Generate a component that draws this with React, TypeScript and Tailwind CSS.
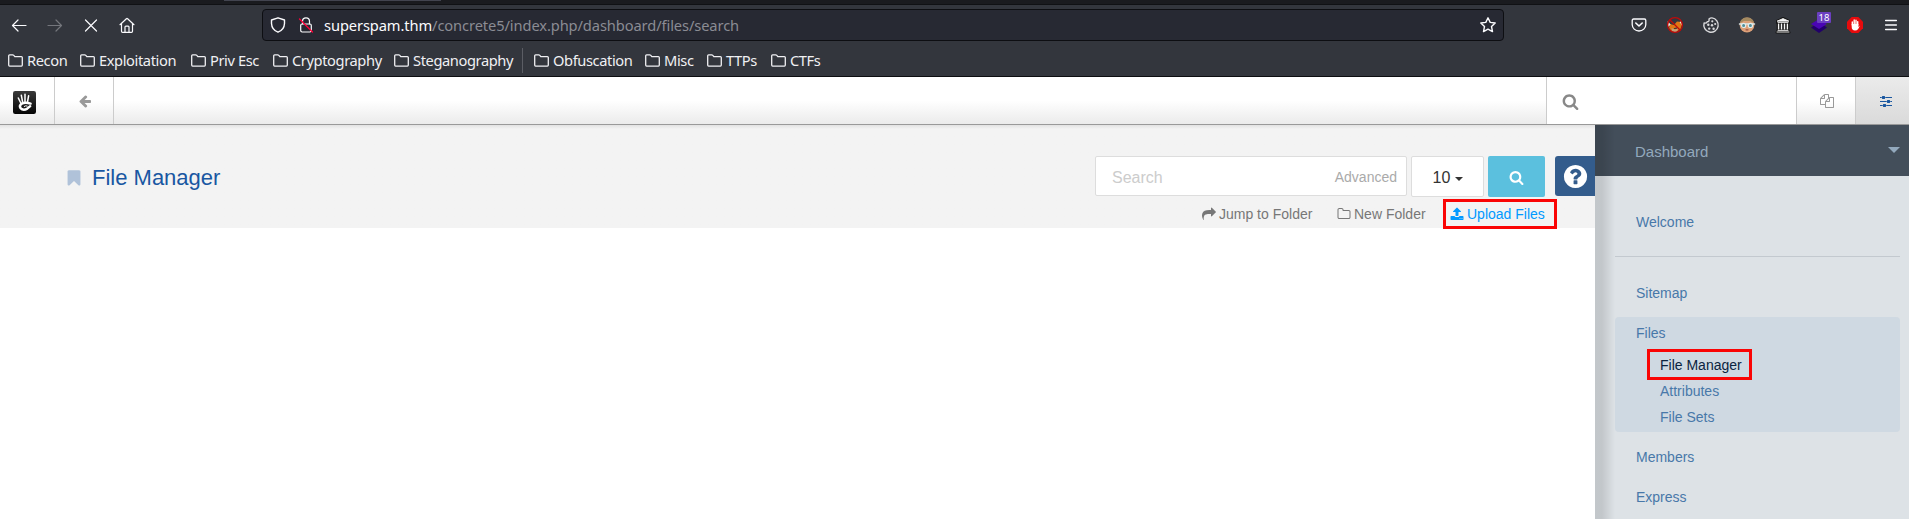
import React from "react";

const FA = {
  search: "M1216 832q0-185-131.5-316.5t-316.5-131.5-316.5 131.5-131.5 316.5 131.5 316.5 316.5 131.5 316.5-131.5 131.5-316.5zm512 832q0 52-38 90t-90 38q-54 0-90-38l-343-342q-179 124-399 124-143 0-273.5-55.5t-225-150-150-225-55.5-273.5 55.5-273.5 150-225 225-150 273.5-55.5 273.5 55.5 225 150 150 225 55.5 273.5q0 220-124 399l343 343q37 37 37 90z",
  bookmark: "M1420 128q23 0 44 9 33 13 52.5 41t19.5 62v1289q0 34-19.5 62t-52.5 41q-19 8-44 8-48 0-83-32l-441-424-441 424q-36 33-83 33-23 0-44-9-33-13-52.5-41t-19.5-62v-1289q0-34 19.5-62t52.5-41q21-9 44-9h1048z",
  arrowLeft: "M1664 896v128q0 53-32.5 90.5t-84.5 37.5h-704l293 294q38 36 38 90t-38 90l-75 76q-37 37-90 37-52 0-91-37l-651-652q-37-37-37-90 0-52 37-91l651-650q38-38 91-38 52 0 90 38l75 74q38 38 38 91t-38 91l-293 293h704q52 0 84.5 37.5t32.5 90.5z",
  share: "M1792 640q0 26-19 45l-512 512q-19 19-45 19t-45-19-19-45v-256h-224q-98 0-175.5 6t-154 21.5-133 42.5-105.5 69.5-80 101-48.5 138.5-17.5 181q0 55 5 123 0 6 2.5 23.5t2.5 26.5q0 15-8.5 25t-23.5 10q-16 0-28-17-7-9-13-22t-13.5-30-10.5-24q-127-285-127-451 0-199 53-333 162-403 875-403h224v-256q0-26 19-45t45-19 45 19l512 512q19 19 19 45z",
  upload: "M1344 1472q0-26-19-45t-45-19-45 19-19 45 19 45 45 19 45-19 19-45zm256 0q0-26-19-45t-45-19-45 19-19 45 19 45 45 19 45-19 19-45zm128-224v320q0 40-28 68t-68 28h-1472q-40 0-68-28t-28-68v-320q0-40 28-68t68-28h427q21 56 70.5 92t110.5 36h256q61 0 110.5-36t70.5-92h427q40 0 68 28t28 68zm-325-648q-17 40-59 40h-256v448q0 26-19 45t-45 19h-256q-26 0-45-19t-19-45v-448h-256q-42 0-59-40-17-39 14-69l448-448q18-19 45-19t45 19l448 448q31 30 14 69z",
  folder: "M1600 1312v-704q0-40-28-68t-68-28h-704q-40 0-68-28t-28-68v-64q0-40-28-68t-68-28h-320q-40 0-68 28t-28 68v960q0 40 28 68t68 28h1216q40 0 68-28t28-68zm128-704v704q0 92-66 158t-158 66h-1216q-92 0-158-66t-66-158v-960q0-92 66-158t158-66h320q92 0 158 66t66 158v32h672q92 0 158 66t66 158z",
  question: "M1024 1376v-192q0-14-9-23t-23-9h-192q-14 0-23 9t-9 23v192q0 14 9 23t23 9h192q14 0 23-9t9-23zm256-672q0-88-55.5-163t-138.5-116-170-41q-243 0-371 213-15 24 8 42l132 100q7 6 19 6 16 0 25-12 53-68 86-92 34-24 86-24 48 0 85.5 26t37.5 59q0 38-20 61t-68 45q-63 28-115.5 86.5t-52.5 125.5v36q0 14 9 23t23 9h192q14 0 23-9t9-23q0-19 21.5-49.5t54.5-49.5q32-18 49-28.5t46-35 44.5-48 28-60.5 12.5-81zm384 192q0 209-103 385.5t-279.5 279.5-385.5 103-385.5-103-279.5-279.5-103-385.5 103-385.5 279.5-279.5 385.5-103 385.5 103 279.5 279.5 103 385.5z",
  files: "M1696 384q40 0 68 28t28 68v1216q0 40-28 68t-68 28h-960q-40 0-68-28t-28-68v-288h-544q-40 0-68-28t-28-68v-672q0-40 20-88t48-76l408-408q28-28 76-48t88-20h416q40 0 68 28t28 68v328q68-40 128-40h416zm-544 213l-299 299h299v-299zm-640-384l-299 299h299v-299zm196 647l316-316v-416h-384v416q0 40-28 68t-68 28h-416v640h512v-256q0-40 20-88t48-76zm956 804v-1152h-384v416q0 40-28 68t-68 28h-416v640h896z",
  sliders: "M352 1408v128h-352v-128h352zm352-128q26 0 45 19t19 45v256q0 26-19 45t-45 19h-256q-26 0-45-19t-19-45v-256q0-26 19-45t45-19h256zm160-384v128h-864v-128h864zm-640-512v128h-224v-128h224zm1312 1024v128h-736v-128h736zm-960-1152q26 0 45 19t19 45v256q0 26-19 45t-45 19h-256q-26 0-45-19t-19-45v-256q0-26 19-45t45-19h256zm640 512q26 0 45 19t19 45v256q0 26-19 45t-45 19h-256q-26 0-45-19t-19-45v-256q0-26 19-45t45-19h256zm320 128v128h-224v-128h224zm0-512v128h-864v-128h864z",
};

function Fa({ name, className }: { name: keyof typeof FA; className: string }) {
  return (
    <svg viewBox="0 0 1792 1792" fill="currentColor" className={`shrink-0 overflow-visible ${className}`}>
      <path d={FA[name]} />
    </svg>
  );
}

function Line({ children, className = "" }: { children: React.ReactNode; className?: string }) {
  return (
    <svg viewBox="0 0 16 16" width="16" height="16" fill="none" stroke="currentColor" strokeWidth="1.2" strokeLinecap="round" strokeLinejoin="round" className={`block shrink-0 overflow-visible ${className}`}>
      {children}
    </svg>
  );
}

function Bookmark({ label, width }: { label: string; width: string }) {
  return (
    <div className={`flex shrink-0 items-center ${width}`}>
      <Line className="mr-[3px]">
        <path d="M.7 13.1V3.7Q.7 2.8 1.6 2.8H4.6Q5.3 2.8 5.8 3.4L6.8 4.6H13.4Q14.3 4.6 14.3 5.5V13.1Q14.3 14.1 13.4 14.1H1.6Q.7 14.1.7 13.1Z" strokeWidth="1.3" />
      </Line>
      <span className="whitespace-nowrap">{label}</span>
    </div>
  );
}

function Browser() {
  return (
    <header className="h-[77px] shrink-0 border-b border-[#0d0e11] bg-[#33363d] font-['Noto_Sans',sans-serif] text-[#fbfbfe]">
      <div className="flex h-[5px] border-b border-[#101114] bg-[#1a1b1f]">
        <div className="ml-[224px] h-px w-[217px] bg-[#42444f]" />
      </div>
      <div className="flex h-[40px] items-center">
        <div className="flex w-[262px] items-center pl-[11px]">
          <Line><path d="M1.5 8.5H15M7 3L1.5 8.5L7 14" /></Line>
          <Line className="ml-[20px] text-[#74767c]"><path d="M1 8.5H14.5M9 3L14.5 8.5L9 14" /></Line>
          <Line className="ml-[20px]"><path d="M2.5 3L13.5 14M13.5 3L2.5 14" /></Line>
          <Line className="ml-[20px]">
            <path d="M1 7.7L7.4 1.7Q8 1.2 8.6 1.7L15 7.7M2.5 6.5V14.2Q2.5 15.3 3.6 15.3H12.4Q13.5 15.3 13.5 14.2V6.5M6 15V10Q6 9.1 6.9 9.1H9.1Q10 9.1 10 10V15" />
          </Line>
        </div>
        <div className="flex h-[32px] w-[1242px] items-center rounded-[4px] border border-[#0d0e12] bg-[#272933] pl-[7px] pr-[7px] text-[14.67px] tracking-[-0.1px]">
          <Line><path d="M8 .8L14.5 3V6.5C14.3 11 12 13.7 8 15.2C4 13.7 1.7 11 1.5 6.5V3Z" strokeWidth="1.4" /></Line>
          <Line className="ml-[12px]">
            <rect x="2.7" y="7" width="10.6" height="8" rx="1.4" />
            <path d="M4.5 6.8V4.3A3.5 3.5 0 0 1 11.5 4.3V6.8" />
            <path d="M1.5 2L14.5 15" stroke="#ff0039" strokeWidth="1.3" />
          </Line>
          <div className="ml-[10px] flex-1 whitespace-nowrap text-[#8b8c94]"><span className="text-[#fbfbfe]">superspam.thm</span>/concrete5/index.php/dashboard/files/search</div>
          <Line><path d="M8 .8L10.2 5.4L15.2 6L11.5 9.5L12.5 14.6L8 12.1L3.5 14.6L4.5 9.5L.8 6L5.8 5.4Z" strokeWidth="1.4" /></Line>
        </div>
        <div className="flex items-center gap-[20px] pl-[127px]">
          <Line>
            <path d="M2.6 2H13.4Q14.8 2 14.8 3.4V7.5A6.8 6.5 0 0 1 1.2 7.5V3.4Q1.2 2 2.6 2Z" strokeWidth="1.3" />
            <path d="M4.8 6L8 9L11.2 6" strokeWidth="1.6" />
          </Line>
          <Line>
            <path d="M3 7L7 8L10 4.5L14 5L15 8L13.5 12L9 15L5 14.5L2 11Z" fill="#df7714" stroke="none" />
            <path d="M.7 4L3.6 7.5L1.2 10ZM14.8 4L12.6 5L15 8.5Z" fill="#f4e8df" stroke="none" />
            <path d="M4.5 11L8 12.5L11 11.5L10 14.5L8 15.3L5 14Z" fill="#c5a17a" stroke="none" />
            <path d="M7.5 11.5L9.5 11.2" stroke="#33363d" />
            <circle cx="8" cy="8" r="7.4" stroke="#c00a0a" strokeWidth="1.3" />
            <path d="M3 3L13 13" stroke="#c00a0a" strokeWidth="1.3" />
          </Line>
          <Line className="text-[#d9d9dc]">
            <path d="M9 .9A7.2 7.2 0 1 1 1.1 6Q3.4 6.6 4.2 4.7Q6.6 4.7 6 2Q7.3 .8 9 .9Z" strokeWidth="1.4" />
            <g fill="currentColor" stroke="none"><circle cx="9.3" cy="4.3" r="1.1" /><circle cx="5.3" cy="7.7" r="1.2" /><circle cx="9" cy="8.2" r="1.2" /><circle cx="6.2" cy="11.6" r="1.2" /><circle cx="10.6" cy="11.8" r="1.2" /><circle cx="12.2" cy="7" r="1.1" /></g>
          </Line>
          <Line>
            <circle cx="8" cy="8" r="7.4" fill="#dca078" stroke="none" />
            <path d="M1 6Q2 .5 8 .5T15 6L11 4H5Z" fill="#a48a60" stroke="none" />
            <path d="M.5 7H15.5" stroke="#d8e5e5" strokeWidth="1.5" />
            <circle cx="4.6" cy="8.4" r="2.1" fill="#4f8e98" stroke="#e2ecec" />
            <circle cx="11.4" cy="8.4" r="2.1" fill="#4f8e98" stroke="#e2ecec" />
            <path d="M7 12.8H9" stroke="#9a4b3f" />
          </Line>
          <Line>
            <path d="M2 4L8 1L14 4V6H13.3V13L14.5 15.5H1.5L2.7 13V6H2Z" fill="#141414" stroke="#141414" strokeWidth="2" />
            <path d="M2.5 4L8 1.6L13.5 4ZM3 5.4H13M2 15H14M3 13.4H13" fill="#f5f5f5" stroke="#f5f5f5" strokeWidth=".9" />
            <path d="M3.6 6.5V12.5M6.5 6.5V12.5M9.5 6.5V12.5M12.4 6.5V12.5" stroke="#f5f5f5" strokeWidth="1.4" strokeLinecap="butt" />
          </Line>
          <div className="relative">
            <Line><path d="M8 5L16 10.5L8 16L0 10.5Z" fill="#22006a" stroke="none" /><path d="M8 2L16 7L8 12L0 7Z" fill="#4a05b4" stroke="none" /></Line>
            <span className="absolute left-[6px] top-[-5px] flex h-[11px] w-[14px] items-center justify-center rounded-[1px] bg-[#6b3fc0] text-[9.5px] leading-none text-white">18</span>
          </div>
          <Line>
            <path d="M4.7 0H11.3L16 4.7V11.3L11.3 16H4.7L0 11.3V4.7Z" fill="#e80b0d" stroke="none" />
            <path d="M5.3 8V5M7.2 7.5V3M9 7.5V3.2M10.7 8V4.6" stroke="#fff" strokeWidth="1.4" />
            <path d="M4.7 7H11.4V10L13 8.4L11.2 12Q10 13.6 8 13.6Q4.7 13.3 4.7 10Z" fill="#fff" stroke="none" />
          </Line>
          <Line className="ml-[2px]"><path d="M.6 3.5H11.4M.6 8H11.4M.6 12.5H11.4" strokeWidth="1.3" /></Line>
        </div>
      </div>
      <div className="flex h-[30px] items-center pl-[8px] text-[14.67px] tracking-[-0.4px] text-[#f0f0f3]">
        <Bookmark label="Recon" width="w-[72px]" />
        <Bookmark label="Exploitation" width="w-[111px]" />
        <Bookmark label="Priv Esc" width="w-[82px]" />
        <Bookmark label="Cryptography" width="w-[121px]" />
        <Bookmark label="Steganography" width="w-[128px]" />
        <div className="mr-[11px] h-[25px] w-px bg-[#5b5d64]" />
        <Bookmark label="Obfuscation" width="w-[111px]" />
        <Bookmark label="Misc" width="w-[62px]" />
        <Bookmark label="TTPs" width="w-[64px]" />
        <Bookmark label="CTFs" width="w-[60px]" />
      </div>
    </header>
  );
}

function Toolbar() {
  return (
    <div className="flex h-[48px] shrink-0 border-b border-[#999] bg-linear-to-b from-white from-50% to-[#ebebeb]">
      <div className="flex w-[55px] items-center border-r border-[#ccc] pl-[13px] pt-[4px]">
        <svg viewBox="0 0 23 23" width="23" height="23">
          <defs><linearGradient id="tile" x1="0" y1="0" x2="0" y2="1"><stop stopColor="#3a3a3a" /><stop offset="1" stopColor="#050505" /></linearGradient></defs>
          <rect width="23" height="23" rx="2.2" fill="url(#tile)" />
          <g fill="none" stroke="#fff" strokeLinecap="round">
            <path d="M5.3 7L8 12.5M8.3 4.2L9.6 11M12 3.3V11M15.6 4.8L14.4 11.5" strokeWidth="1.5" />
            <path d="M17.6 12.6Q12 10.8 8.8 12.6Q5.8 14.6 7.5 17.2Q10.2 20 14.3 17.6L17.2 15.2" strokeWidth="2.4" />
            <path d="M11.2 15.4Q12.7 14.2 14.2 15" strokeWidth="1" />
          </g>
        </svg>
      </div>
      <div className="flex w-[59px] items-center justify-center border-r border-[#ccc] pl-px text-[#999]"><Fa name="arrowLeft" className="size-[14px]" /></div>
      <div className="flex-1" />
      <div className="flex w-[251px] items-center border-x border-[#ccc] bg-white pl-[15px] pt-[2px] text-[#888]"><Fa name="search" className="size-[17px]" /></div>
      <div className="flex w-[59px] items-center justify-center border-r border-[#ccc] pl-[2px] text-[#999]"><Fa name="files" className="size-[14px]" /></div>
      <div className="flex w-[53px] items-center bg-linear-to-b from-[#ebebeb] to-[#dadada] pl-[24px] text-[#1a57a0]"><Fa name="sliders" className="size-[14px]" /></div>
    </div>
  );
}

function MainPane() {
  return (
    <main className="flex-1">
      <div className="flex h-[103px] justify-between bg-[#f3f3f3] bg-linear-to-b from-[#e2e2e2] to-[#f3f3f3] to-[4px]">
        <div className="flex h-[106px] items-center pl-[65px] text-[#1957a2]">
          <Fa name="bookmark" className="mb-px size-[18px] text-[#b0c2d9]" />
          <h1 className="ml-[9px] text-[22px] leading-none">File Manager</h1>
        </div>
        <div className="pt-[31px]">
          <div className="flex h-[41px] items-start">
            <div className="flex h-[40px] w-[312px] items-center justify-between rounded-[2px] border border-[#ddd] bg-white pl-[16px] pr-[9px]">
              <span className="pt-[3px] text-[16px] text-[#ccc]">Search</span>
              <span className="pt-[2px] text-[14px] text-[#aaa]">Advanced</span>
            </div>
            <div className="ml-[4px] flex h-[41px] w-[73px] items-center justify-center rounded-[2px] border border-[#ddd] bg-white pl-px pt-[2px] text-[16px] text-[#333]">
              10<span className="ml-[5px] mt-[3px] border-x-4 border-t-4 border-x-transparent border-t-[#333]" />
            </div>
            <div className="ml-[4px] flex h-[41px] w-[57px] items-center justify-center rounded-[2px] bg-[#5bc0de] pt-[2px] text-white"><Fa name="search" className="size-[15px]" /></div>
            <div className="ml-[10px] flex h-[40px] w-[40px] items-center rounded-l-[3px] bg-[#335c8c] pl-[7px] pt-px text-white"><Fa name="question" className="size-[27px]" /></div>
          </div>
          <div className="flex h-[31px] items-center pl-[107px] pt-[3px] text-[14px] text-[#777]">
            <div className="flex w-[135px] items-center"><Fa name="share" className="mr-[3px] size-[14px]" />Jump to Folder</div>
            <div className="flex w-[106px] items-center"><Fa name="folder" className="mr-[3px] size-[14px]" />New Folder</div>
            <div className="flex h-[30px] w-[114px] items-center border-[3px] border-[#fa0505] pl-[4px] text-[#0099ff]"><Fa name="upload" className="mr-[3px] size-[14px]" />Upload Files</div>
          </div>
        </div>
      </div>
    </main>
  );
}

function Sidebar() {
  return (
    <aside className="relative w-[314px] shrink-0 bg-[#dde2e6] text-[14px] text-[#4878a9]">
      <div className="flex h-[51px] items-center justify-between bg-[#434e5a] pl-[40px] pr-[9px] pt-[3px] text-[15px] text-[#93a9bd]">
        <span>Dashboard</span>
        <span className="mt-[-5px] border-x-[6px] border-t-[6px] border-x-transparent border-t-[#93a9bd]" />
      </div>
      <nav className="pl-[20px] pr-[9px]">
        <div className="flex h-[81px] items-center border-b border-[#c3c9cf] pl-[21px] pt-[12px]">Welcome</div>
        <div className="flex h-[60px] items-center pl-[21px] pt-[13px]">Sitemap</div>
        <div className="h-[115px] rounded-[4px] bg-[#cfd9e2] pl-[21px] pt-[2px]">
          <div className="flex h-[28px] items-center">Files</div>
          <div className="ml-[11px] mt-[2px] flex h-[31px] w-[105px] items-center border-[3px] border-[#fa0505] pl-[10px] pt-px text-[#0a2440]">File Manager</div>
          <div className="flex h-[23px] items-center pl-[24px]">Attributes</div>
          <div className="flex h-[29px] items-center pl-[24px]">File Sets</div>
        </div>
        <div className="flex h-[40px] items-center pl-[21px] pt-[11px]">Members</div>
        <div className="flex h-[40px] items-center pl-[21px] pt-[11px]">Express</div>
      </nav>
      <div className="pointer-events-none absolute inset-y-0 left-0 w-[20px] bg-linear-to-r from-black/12 from-35% to-transparent" />
    </aside>
  );
}

export default function App() {
  return (
    <div className="flex h-[519px] w-[1909px] flex-col overflow-hidden bg-white font-['Liberation_Sans',Arial,sans-serif]">
      <Browser />
      <Toolbar />
      <div className="flex flex-1">
        <MainPane />
        <Sidebar />
      </div>
    </div>
  );
}
